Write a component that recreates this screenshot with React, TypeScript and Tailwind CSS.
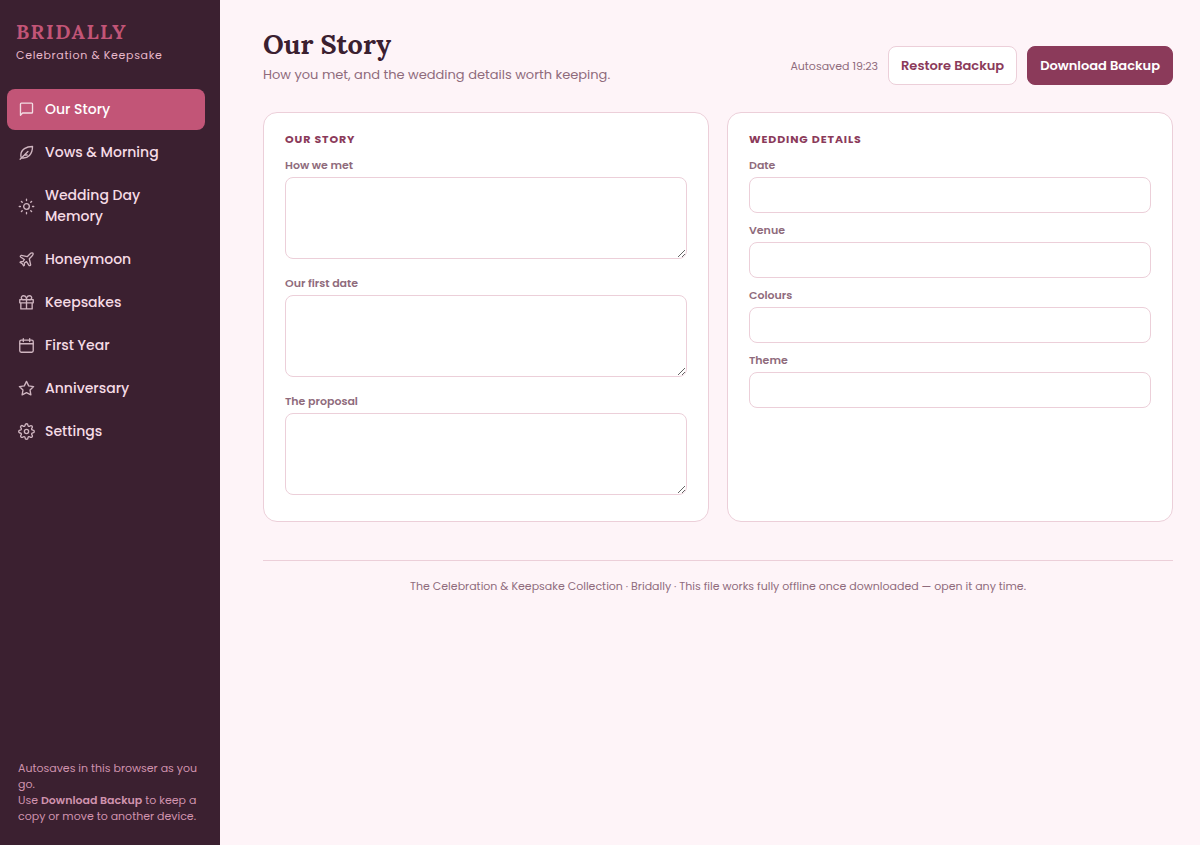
import type { ReactNode } from "react";

type NavItem = { label: string; icon: ReactNode };

function Icon({ children }: { children: ReactNode }) {
  return (
    <svg
      viewBox="0 0 24 24"
      fill="none"
      stroke="currentColor"
      strokeWidth="1.9"
      strokeLinecap="round"
      strokeLinejoin="round"
      aria-hidden="true"
      className="size-[17px] shrink-0 opacity-80"
    >
      {children}
    </svg>
  );
}

const navItems: NavItem[] = [
  {
    label: "Our Story",
    icon: <path d="M3.500 20V4.200a1.200 1.200 0 0 1 1.200-1.200h14.600a1.200 1.200 0 0 1 1.200 1.200v11.600a1.200 1.200 0 0 1-1.200 1.200H6.500z" />,
  },
  {
    label: "Vows & Morning",
    icon: (
      <>
        <path d="M20.500 3.500C12 3.500 4 7.500 4 16c0 1.500.4 2.800 1 3.500 9 1.500 15.500-5 15.500-16z" />
        <path d="M3 21.500 14 10.500M9 15.500h4" />
      </>
    ),
  },
  {
    label: "Wedding Day Memory",
    icon: (
      <>
        <circle cx="12" cy="12" r="4" />
        <path d="M12 1.800v1.700M12 20.500v1.700M4.800 4.800l1.200 1.200M18 18l1.200 1.200M1.800 12h1.700M20.500 12h1.700M4.800 19.200 6 18M18 6l1.200-1.200" />
      </>
    ),
  },
  {
    label: "Honeymoon",
    icon: (
      <path d="M17.8 19.2 16 11l3.5-3.5C21 6 21.5 4 21 3c-1-.5-3 0-4.5 1.5L13 8 4.8 6.200c-.5-.1-.9.1-1.1.5l-.3.5c-.2.5-.1 1 .3 1.300L9 12l-2 3H4l-1 1 3 2 2 3 1-1v-3l3-2 3.500 5.300c.3.4.8.5 1.300.3l.5-.2c.4-.3.6-.7.5-1.200z" />
    ),
  },
  {
    label: "Keepsakes",
    icon: (
      <>
        <path d="M2.500 8h19v4.500h-19zM4 12.500V21h16v-8.500M12 8v13" />
        <path d="M12 8H8a2.800 2.800 0 1 1 0-5.500c2.500 0 4 2.500 4 5.500zM12 8h4a2.800 2.800 0 1 0 0-5.500c-2.500 0-4 2.500-4 5.500z" />
      </>
    ),
  },
  {
    label: "First Year",
    icon: (
      <>
        <rect x="2.500" y="4.500" width="19" height="17" rx="2" />
        <path d="M16.500 2.500v4M7.500 2.500v4M2.500 9.500h19" />
      </>
    ),
  },
  {
    label: "Anniversary",
    icon: <path d="m12 2 3.090 6.260L22 9.270l-5 4.870 1.180 6.880L12 17.770l-6.180 3.250L7 14.140 2 9.270l6.910-1.010z" />,
  },
  {
    label: "Settings",
    icon: (
      <>
        <circle cx="12" cy="12" r="3" />
        <path d="M19.4 15a1.65 1.65 0 0 0 .33 1.82l.06.06a2 2 0 1 1-2.83 2.83l-.06-.06a1.65 1.65 0 0 0-1.82-.33 1.65 1.65 0 0 0-1 1.51V21a2 2 0 0 1-4 0v-.09A1.65 1.65 0 0 0 9 19.4a1.65 1.65 0 0 0-1.82.33l-.06.06a2 2 0 1 1-2.83-2.83l.06-.06a1.65 1.65 0 0 0 .33-1.82 1.65 1.65 0 0 0-1.51-1H3a2 2 0 0 1 0-4h.09A1.65 1.65 0 0 0 4.600 9a1.65 1.65 0 0 0-.33-1.82l-.06-.06a2 2 0 1 1 2.830-2.83l.06.06a1.65 1.65 0 0 0 1.820.33H9a1.65 1.65 0 0 0 1-1.510V3a2 2 0 0 1 4 0v.09a1.65 1.65 0 0 0 1 1.510 1.65 1.65 0 0 0 1.820-.33l.06-.06a2 2 0 1 1 2.830 2.830l-.06.06a1.65 1.65 0 0 0-.33 1.820V9a1.65 1.65 0 0 0 1.510 1H21a2 2 0 0 1 0 4h-.09a1.65 1.65 0 0 0-1.510 1z" />
      </>
    ),
  },
];

const stories = [
  { id: "how-we-met", label: "How we met" },
  { id: "first-date", label: "Our first date" },
  { id: "proposal", label: "The proposal" },
];

const details = [
  { id: "date", label: "Date" },
  { id: "venue", label: "Venue" },
  { id: "colours", label: "Colours" },
  { id: "theme", label: "Theme" },
];

function Sidebar() {
  return (
    <aside className="flex w-[220px] shrink-0 flex-col bg-[#3b2030] px-[7px] pt-[20px] pb-[21px]">
      <div className="px-[9px]">
        <div className="font-['Lora','Liberation_Serif',serif] text-[20px] leading-[24px] font-bold tracking-[0.08em] text-[#c25577]">
          BRIDALLY
        </div>
        <div className="mt-[3px] text-[11px] leading-[16px] tracking-[0.06em] text-[#e8b8cb]">
          Celebration &amp; Keepsake
        </div>
      </div>
      <nav className="mt-[26px] mr-[8px] flex flex-col gap-[2px]">
        {navItems.map((item, i) => (
          <button
            key={item.label}
            type="button"
            aria-current={i === 0 ? "page" : undefined}
            className={
              i === 0
                ? "flex items-center gap-[10px] rounded-lg bg-[#c25577] px-[11px] py-[10px] text-left text-[14px] leading-[21px] font-medium text-white"
                : "flex items-center gap-[10px] rounded-lg px-[11px] py-[10px] text-left text-[14px] leading-[21px] font-medium text-[#f5dbe5]"
            }
          >
            <Icon>{item.icon}</Icon>
            <span>{item.label}</span>
          </button>
        ))}
      </nav>
      <p className="mt-auto px-[11px] text-[11px] leading-[16px] text-[#d093ae]">
        Autosaves in this browser as you go.
        <br />
        Use <strong className="font-semibold">Download Backup</strong> to keep a copy or move to another device.
      </p>
    </aside>
  );
}

function Card({ title, children }: { title: string; children: ReactNode }) {
  return (
    <section className="rounded-[14px] border border-[#eccfd9] bg-white px-[21px] pt-[17px] pb-[26px]">
      <h2 className="text-[11px] leading-[18px] font-bold tracking-[0.08em] text-[#8b3a5a] uppercase">{title}</h2>
      {children}
    </section>
  );
}

export default function App() {
  return (
    <div className="flex min-h-screen bg-[#fef4f8] font-['Poppins','Inter',sans-serif]">
      <Sidebar />
      <main className="min-w-0 flex-1 pt-[26px] pr-[27px] pl-[43px]">
        <header className="flex flex-wrap items-end justify-between gap-4">
          <div>
            <h1 className="font-['Lora','Liberation_Serif',serif] text-[27px] leading-[36px] font-bold text-[#3b2030]">
              Our Story
            </h1>
            <p className="mt-[2px] text-[13px] leading-[21px] text-[#8f6b7c]">
              How you met, and the wedding details worth keeping.
            </p>
          </div>
          <div className="flex items-center gap-[10px]">
            <span className="text-[11px] leading-[16px] text-[#8f6b7c]">Autosaved 19:23</span>
            <button
              type="button"
              className="rounded-lg border border-[#eccfd9] bg-white px-[12px] py-[9px] text-[13px] leading-[19px] font-semibold text-[#8b3a5a]"
            >
              Restore Backup
            </button>
            <button
              type="button"
              className="rounded-lg border border-[#8b3a5a] bg-[#8b3a5a] px-[12px] py-[9px] text-[13px] leading-[19px] font-semibold text-white"
            >
              Download Backup
            </button>
          </div>
        </header>

        <div className="mt-[27px] grid grid-cols-2 gap-[18px]">
          <Card title="Our Story">
            <div className="mt-[9px] flex flex-col gap-[16px]">
              {stories.map((f) => (
                <div key={f.id}>
                  <label htmlFor={f.id} className="block text-[11px] leading-[16px] font-semibold text-[#8f6b7c]">
                    {f.label}
                  </label>
                  <textarea
                    id={f.id}
                    className="mt-[4px] block h-[82px] w-full resize-y rounded-lg border border-[#eccfd9] bg-white px-3 py-2 text-[13px] text-[#3b2030]"
                  />
                </div>
              ))}
            </div>
          </Card>
          <Card title="Wedding Details">
            <div className="mt-[9px] flex flex-col gap-[9px]">
              {details.map((f) => (
                <div key={f.id}>
                  <label htmlFor={f.id} className="block text-[11px] leading-[16px] font-semibold text-[#8f6b7c]">
                    {f.label}
                  </label>
                  <input
                    id={f.id}
                    type="text"
                    className="mt-[4px] block h-[36px] w-full rounded-lg border border-[#eccfd9] bg-white px-3 text-[13px] text-[#3b2030]"
                  />
                </div>
              ))}
            </div>
          </Card>
        </div>

        <footer className="mt-[38px] border-t border-[#eccfd9] pt-[16px] pb-[24px] text-center text-[11px] leading-[18px] text-[#8f6b7c]">
          The Celebration &amp; Keepsake Collection · Bridally · This file works fully offline once downloaded — open it
          any time.
        </footer>
      </main>
    </div>
  );
}
